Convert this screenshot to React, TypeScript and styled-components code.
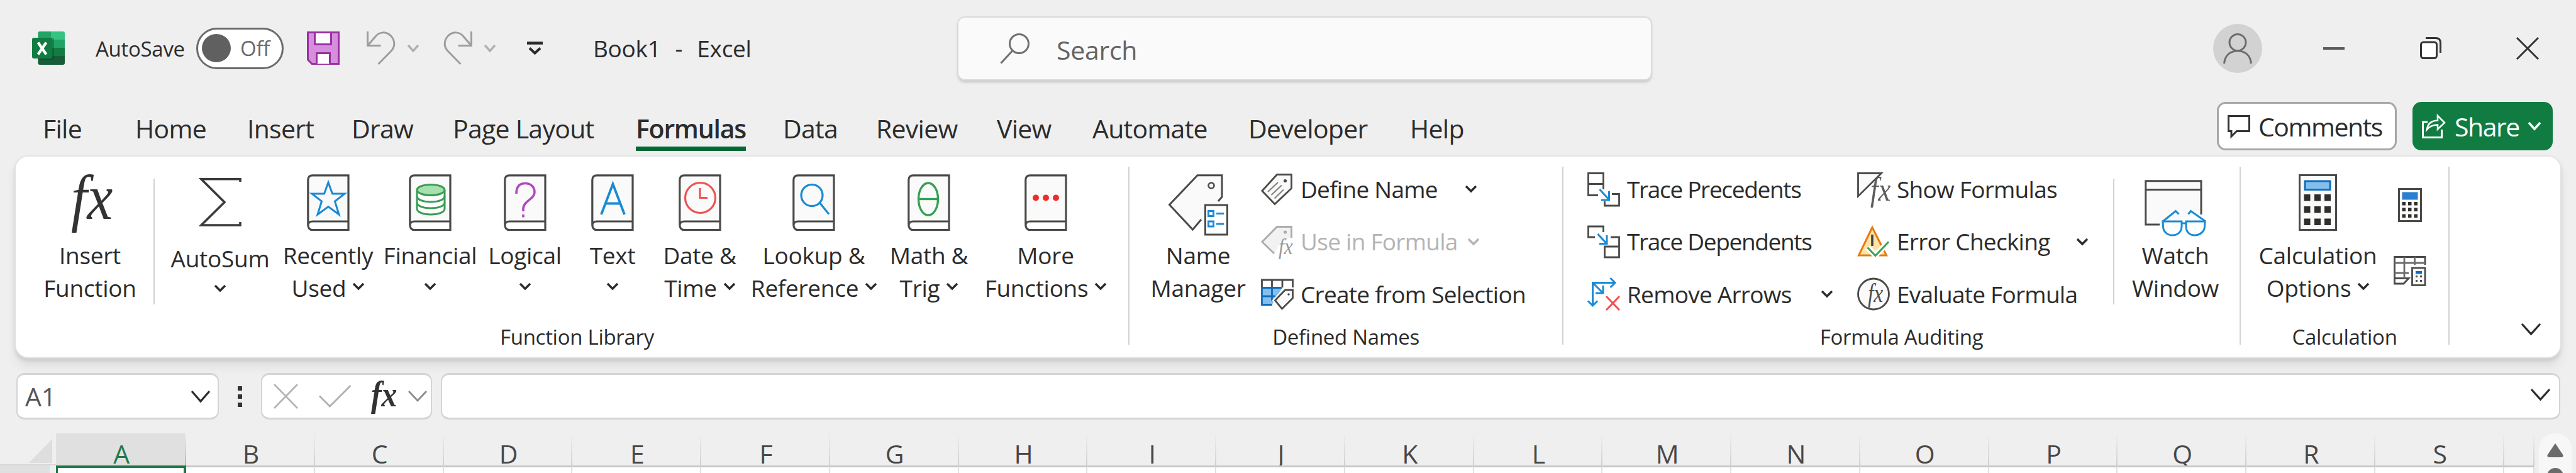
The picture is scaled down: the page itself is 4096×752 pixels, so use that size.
import React from "react";
import styled, { createGlobalStyle } from "styled-components";

const ink = "#2b2b2b";
const line = "#4a4a48";
const paper = "#fafafa";
const blue = "#1a8ad4";
const deepBlue = "#0f6cbd";
const green = "#107c41";

const GlobalStyle = createGlobalStyle`
  *, *::before, *::after { box-sizing: border-box; }
  html, body { margin: 0; padding: 0; background: #efefef; }
  body { overflow: hidden; }
  svg { display: block; flex: none; overflow: visible; }
`;

const Window = styled.div`
  width: 4096px;
  height: 752px;
  overflow: hidden;
  display: flex;
  flex-direction: column;
  background: #efefef;
  color: ${ink};
  font-family: "Open Sans", "Noto Sans", sans-serif;
  letter-spacing: -0.018em;
  white-space: nowrap;
`;

/* ---------- title bar ---------- */

const TitleBar = styled.header`
  height: 153px;
  flex: none;
  display: flex;
  align-items: center;
  padding-left: 51px;
`;

const TitleSlot = styled.div<{ $w: number }>`
  width: ${(p) => p.$w}px;
  flex: none;
  display: flex;
  align-items: center;
`;

const AutoSaveLabel = styled.span`
  font-size: 33px;
  line-height: 44px;
  padding-top: 2px;
`;

const Toggle = styled.div`
  width: 139px;
  height: 66px;
  border: 3px solid #6b6b6b;
  border-radius: 33px;
  background: #fff;
  display: flex;
  align-items: center;
  padding-left: 6px;
  gap: 15px;
  font-size: 33px;
  color: #6a6a6a;
`;

const Knob = styled.span`
  width: 46px;
  height: 45px;
  border-radius: 50%;
  background: #606060;
`;

const DocTitle = styled.span`
  font-size: 37px;
  line-height: 50px;
  padding-left: 2px;
  white-space: pre;
  word-spacing: 2.2px;
`;

const SearchBox = styled.div`
  width: 1101px;
  height: 98px;
  margin-top: 1px;
  border-radius: 10px;
  background: #fafafa;
  box-shadow: 0 0 0 2px #dadada, 0 4px 4px 1px #c9c9c9;
  display: flex;
  align-items: center;
  padding-left: 66px;
  gap: 42px;
  font-size: 41px;
  color: #646464;
`;

const SearchText = styled.span`
  padding-top: 3px;
`;

const Avatar = styled.div`
  width: 78px;
  height: 78px;
  border-radius: 50%;
  background: #d2d2d2;
  display: grid;
  place-items: center;
`;

/* ---------- tab strip ---------- */

const TabStrip = styled.nav`
  height: 96px;
  flex: none;
  display: flex;
  padding-left: 68px;
`;

const TabSlot = styled.div<{ $w: number }>`
  width: ${(p) => p.$w}px;
  flex: none;
  display: flex;
  align-items: flex-start;
`;

const Tab = styled.span<{ $active?: boolean }>`
  margin-top: 23px;
  height: 64px;
  line-height: 56px;
  font-size: 41px;
  font-weight: ${(p) => (p.$active ? 600 : 400)};
  letter-spacing: ${(p) => (p.$active ? "-0.03em" : "-0.018em")};
  border-bottom: 7px solid ${(p) => (p.$active ? "#006a35" : "transparent")};
`;

const StripActions = styled.div`
  margin-left: auto;
  margin-right: 37px;
  padding-top: 9px;
  display: flex;
  align-items: flex-start;
  gap: 25px;
`;

const CommentsButton = styled.button`
  width: 286px;
  height: 77px;
  padding: 0 0 0 14px;
  display: flex;
  align-items: center;
  gap: 13px;
  font: inherit;
  font-size: 41px;
  letter-spacing: -0.036em;
  color: ${ink};
  background: #fff;
  border: 3px solid #a6a6a6;
  border-radius: 14px;
`;

const ShareButton = styled(CommentsButton)`
  width: 223px;
  padding-left: 12px;
  gap: 14px;
  color: #fff;
  background: ${green};
  border-color: ${green};
`;

/* ---------- ribbon ---------- */

const Ribbon = styled.section`
  height: 319px;
  flex: none;
  margin: 0 25px;
  display: flex;
  background: #fff;
  border-radius: 20px;
  box-shadow: 0 0 3px 2px #e4e4e4, 0 4px 6px 0 #bdbdbd, 0 14px 16px 0 #dddddd;
`;

const Group = styled.div<{ $w: number }>`
  width: ${(p) => p.$w}px;
  flex: none;
  display: flex;
  flex-direction: column;
`;

const GroupBody = styled.div<{ $indent: number }>`
  height: 267px;
  padding-left: ${(p) => p.$indent}px;
  display: flex;
  align-items: flex-start;
`;

const GroupLabel = styled.div<{ $shift?: number }>`
  padding-left: ${(p) => p.$shift ?? 0}px;
  font-size: 33px;
  line-height: 40px;
  text-align: center;
`;

const GroupDivider = styled.div`
  width: 2px;
  height: 283px;
  flex: none;
  margin-top: 16px;
  background: #d2d2d2;
`;

const InnerDivider = styled.div<{ $after?: number }>`
  width: 2px;
  height: 200px;
  flex: none;
  margin: 35px ${(p) => p.$after ?? 0}px 0 0;
  background: #d2d2d2;
`;

const BigButton = styled.div<{ $w: number }>`
  width: ${(p) => p.$w}px;
  flex: none;
  display: flex;
  flex-direction: column;
  align-items: center;
  font-size: 37px;
  line-height: 52px;
`;

const BigIcon = styled.div<{ $top?: number }>`
  height: 131px;
  padding-top: ${(p) => p.$top ?? 28}px;
`;

const BigLine = styled.div<{ $drop?: number }>`
  height: 52px;
  padding-top: ${(p) => p.$drop ?? 0}px;
  display: flex;
  align-items: center;
  gap: 11px;

  svg { margin-bottom: 5px; }
`;

const SmallColumn = styled.div<{ $w: number }>`
  width: ${(p) => p.$w}px;
  flex: none;
  padding-top: 10px;
`;

const SmallRow = styled.div<{ $disabled?: boolean }>`
  height: 83.5px;
  display: flex;
  align-items: center;
  font-size: 37px;
  line-height: 52px;
  color: ${(p) => (p.$disabled ? "#b4b4b4" : ink)};
`;

const SmallIcon = styled.div`
  width: 63px;
  flex: none;
`;

const SmallText = styled.span<{ $w?: number; $tight?: boolean }>`
  width: ${(p) => (p.$w ? p.$w + "px" : "auto")};
  letter-spacing: ${(p) => (p.$tight ? "-0.036em" : "-0.02em")};
`;

const IconColumn = styled.div`
  width: 75px;
  padding-top: 50px;
  display: flex;
  flex-direction: column;
  align-items: center;
  gap: 53px;
`;

const RibbonEnd = styled.div`
  flex: 1;
  display: flex;
  justify-content: flex-end;
  align-items: flex-end;
  padding: 0 31px 35px 0;
`;

/* ---------- formula bar ---------- */

const FormulaBar = styled.div`
  flex: none;
  margin: 25px 25px 0 26px;
  height: 74px;
  display: flex;
`;

const Field = styled.div`
  height: 74px;
  flex: none;
  display: flex;
  align-items: center;
  background: #fff;
  border: 2px solid #d4d4d4;
  border-width: 3px 2px;
  border-radius: 13px;
`;

const NameBox = styled(Field)`
  width: 322px;
  padding: 0 12px 0 12px;
  justify-content: space-between;
  font-size: 41px;
  line-height: 50px;
  color: #555;
`;

const Grip = styled.div`
  width: 67px;
  display: flex;
  flex-direction: column;
  justify-content: center;
  align-items: center;
  gap: 6px;
`;

const GripDot = styled.span`
  width: 7px;
  height: 7px;
  background: #333;
`;

const EntryButtons = styled(Field)`
  width: 272px;
  padding-left: 18px;
`;

const EntrySlot = styled.div<{ $w: number }>`
  width: ${(p) => p.$w}px;
  flex: none;
`;

const FormulaInput = styled(Field)`
  flex: 1;
  margin-left: 14px;
  justify-content: flex-end;
  padding: 0 14px 6px 0;
`;

/* ---------- sheet ---------- */

const Sheet = styled.main`
  margin-top: 22px;
  flex: 1;
  display: flex;
`;

const Corner = styled.div`
  width: 89px;
  flex: none;
  display: flex;
  flex-direction: column;
`;

const CornerTop = styled.div`
  height: 51px;
  padding: 9px 0 0 46px;
  border-bottom: 2px solid #d8d8d8;
`;

const RowHeader = styled.div`
  flex: 1;
  width: 79px;
  background: #e0e0e0;
`;

const Column = styled.div<{ $w: number }>`
  width: ${(p) => p.$w}px;
  flex: none;
  display: flex;
  flex-direction: column;
`;

const ColumnHeader = styled.div<{ $selected?: boolean }>`
  height: 51px;
  padding: 6px 0 0 3px;
  line-height: 52px;
  text-align: center;
  font-size: 41px;
  color: ${(p) => (p.$selected ? "#1f7a4d" : "#484848")};
  background: ${(p) => (p.$selected ? "#e0e0e0" : "transparent")};
  border-right: 2px solid;
  border-image: linear-gradient(#efefef, ${(p) => (p.$selected ? "#b4b4b4" : "#cfcfcf")}) 1;
`;

const Cell = styled.div<{ $selected?: boolean }>`
  flex: 1;
  background: #fff;
  border-top: ${(p) => (p.$selected ? "4px solid #1f7a48" : "3px solid #c8c8c8")};
  border-right: ${(p) => (p.$selected ? "4px solid #1f7a48" : "2px solid #e1e1e1")};
  border-left: ${(p) => (p.$selected ? "3px solid #1f7a48" : "0")};
`;

const ScrollTrack = styled.div`
  width: 53px;
  margin-left: 7px;
  border-radius: 26px 26px 0 0;
  background: #f7f7f7;
  display: flex;
  flex-direction: column;
  align-items: center;
  padding-top: 15px;
  gap: 16px;
`;

const ScrollThumb = styled.div`
  width: 26px;
  height: 60px;
  border-radius: 13px;
  background: #6b6b6b;
`;

/* ---------- icons ---------- */

type ChevronProps = { w?: number; h?: number; color?: string; stroke?: number };

const Chevron = ({ w = 18, h = 9, color = ink, stroke = 3.4 }: ChevronProps) => (
  <svg width={w} height={h + 2} viewBox={`0 0 ${w} ${h + 2}`} fill="none" stroke={color} strokeWidth={stroke}>
    <path d={`M1 1 L${w / 2} ${h} L${w - 1} 1`} />
  </svg>
);

const ExcelLogo = () => (
  <svg width="52" height="53" viewBox="0 0 52 53">
    <path d="M12 0h18v13H9.500V2.500Q9.500 0 12 0Z" fill="#21a366" />
    <path d="M30 0h19q3 0 3 3v10H30Z" fill="#33c481" />
    <path d="M9.500 13H30v13H9.500Z" fill="#107c41" />
    <path d="M30 13h22v13H30Z" fill="#21a366" />
    <path d="M9.500 26H30v13H9.500Z" fill="#185c37" />
    <path d="M30 26h22v13H30Z" fill="#107c41" />
    <path d="M9.500 39H52v11q0 3-3 3H12.500q-3 0-3-3Z" fill="#185c37" />
    <path d="M12 10h20q3 0 3 3v29q0 3-3 3H9.500V10Z" fill="#0b3d22" opacity=".35" />
    <rect x="0" y="10" width="32" height="33" rx="3" fill="#107c41" />
    <path d="M9.500 17.500 22.500 36.500M22.500 17.500 9.500 36.500" stroke="#fff" strokeWidth="4.300" />
  </svg>
);

const SaveIcon = () => (
  <svg width="52" height="53" viewBox="0 0 52 53" stroke="#9b30a2" strokeWidth="3">
    <path d="M1.500 1.500H50.500V51.500H8L1.500 45Z" fill="#d68fdc" />
    <path d="M12.500 1.500H38.500V20.500H12.500Z" fill="#fff" />
    <path d="M15.500 51.500V34.500H36.500V51.500" fill="#fff" />
  </svg>
);

const UndoIcon = ({ flip }: { flip?: boolean }) => (
  <svg width="48" height="53" viewBox="0 0 48 53" fill="none" stroke="#9d9d9d" strokeWidth="3">
    <g transform={flip ? "translate(48 0) scale(-1 1)" : undefined}>
      <path d="M2.500 0V22.500H23.500" />
      <path d="M3 22 15.500 7.500C21 1 31 -.5 38.500 6 46 13 47 23 40.500 30.500L19.500 52" />
    </g>
  </svg>
);

const QuickAccessIcon = () => (
  <svg width="25" height="22" viewBox="0 0 25 22" fill="none" stroke={ink}>
    <path d="M0 2.500H25" strokeWidth="4.500" />
    <path d="M4 10.500 12.500 18.500 21 10.500" strokeWidth="4" />
  </svg>
);

const SearchIcon = () => (
  <svg width="48" height="49" viewBox="0 0 48 49" fill="none" stroke="#707070" strokeWidth="3">
    <circle cx="30.500" cy="16.500" r="15" />
    <path d="M20 27.500 1.500 47.500" />
  </svg>
);

const PersonIcon = () => (
  <svg width="46" height="48" viewBox="0 0 46 48" fill="none" stroke="#6c6c6c" strokeWidth="3">
    <circle cx="23" cy="14.500" r="13" />
    <path d="M1.500 48C3 35 11 28 23 28S43 35 44.500 48" />
  </svg>
);

const MinimizeIcon = () => (
  <svg width="34" height="4" viewBox="0 0 34 4">
    <rect width="34" height="4" fill="#5a5a5a" />
  </svg>
);

const RestoreIcon = () => (
  <svg width="34" height="35" viewBox="0 0 34 35" fill="none" stroke="#333" strokeWidth="3">
    <rect x="1.500" y="8" width="25" height="25.500" rx="4" fill="#fff" />
    <path d="M9 1.500H25Q32.500 1.500 32.500 9V25" />
  </svg>
);

const CloseIcon = () => (
  <svg width="36" height="36" viewBox="0 0 36 36" stroke="#333" strokeWidth="3">
    <path d="M1 1 35 35M35 1 1 35" />
  </svg>
);

const CommentIcon = () => (
  <svg width="36" height="36" viewBox="0 0 36 36" fill="none" stroke="#333" strokeWidth="3">
    <path d="M1.500 1.500H34.500V25.500H14.500L6 34V25.500H1.500Z" />
  </svg>
);

const ShareIcon = () => (
  <svg width="38" height="38" viewBox="0 0 38 38" fill="none" stroke="#fff" strokeWidth="3">
    <path d="M9 12H1.500V36.500H31.500V24" />
    <path d="M8 24C9 15 15 10 25 9.500V2L36 13 25 23.500V16.500C17 16.500 12 19 8 24Z" strokeWidth="2.600" />
  </svg>
);

type FxProps = { x: number; y: number; size: number; fill?: string; sx?: number; weight?: number };

const FxText = ({ x, y, size, fill = line, sx = 0.9, weight = 400 }: FxProps) => (
  <text
    transform={`translate(${x} ${y}) scale(${sx} 1)`}
    fontFamily='"Liberation Serif", serif'
    fontStyle="italic"
    fontWeight={weight}
    fontSize={size}
    letterSpacing="0"
    fill={fill}
  >
    fx
  </text>
);

const InsertFunctionIcon = () => (
  <svg width="78" height="90" viewBox="0 0 78 90">
    <FxText x={9} y={71} size={102} fill="#333" sx={0.9} />
  </svg>
);

const SigmaIcon = () => (
  <svg width="67" height="78" viewBox="0 0 67 78" fill="none" stroke="#3b3b39" strokeWidth="3.600">
    <path d="M65 6V1.800H3L40 38.500 3 75H65V70" />
  </svg>
);

const Book = ({ children }: { children: React.ReactNode }) => (
  <svg width="68" height="91" viewBox="0 0 68 91" fill="none">
    <path d="M9 1.800H66V88.500H9Q1.800 88.500 1.800 80V9Q1.800 1.800 9 1.800Z" fill={paper} />
    <path d="M66 75H9Q1.800 75 1.800 82 1.800 88.500 9 88.500H66Z" fill="#fff" />
    <path
      d="M66 75H9Q1.800 75 1.800 82M9 1.800H66V88.500H9Q1.800 88.500 1.800 80V9Q1.800 1.800 9 1.800Z"
      stroke={line}
      strokeWidth="3.200"
    />
    {children}
  </svg>
);

const StarMark = () => (
  <path
    d="M34 13 40.500 31H60L44.500 43 51 64 34 51.500 17 64 23.500 43 8 31H27.500Z"
    stroke={blue}
    strokeWidth="3"
  />
);

const CoinsMark = () => (
  <g stroke="#3a9c55" strokeWidth="3">
    <path d="M13 25V55C13 60 22 64 35 64S57 60 57 55V25" fill="#fff" />
    <path d="M13 35C13 40 22 44 35 44S57 40 57 35M13 45C13 50 22 54 35 54S57 50 57 45" />
    <ellipse cx="35" cy="25" rx="22" ry="8.500" fill="#a5e0ad" />
  </g>
);

const QuestionMark = () => (
  <g stroke="#b146c2" strokeWidth="3.600">
    <path d="M20 31C20 20 25 14.500 34 14.500S49 20 49 28.500C49 40 31 42 31 55V59" />
    <path d="M31 64V68.500" />
  </g>
);

const LetterMark = () => (
  <path d="M16 64 34.500 15.500 53 64M22.500 46.500H46.500" stroke={blue} strokeWidth="3.800" />
);

const ClockMark = () => (
  <g stroke="#ef5350" strokeWidth="3.200">
    <circle cx="34.500" cy="37.500" r="24" />
    <path d="M34 22V37.500H46" />
  </g>
);

const LensMark = () => (
  <g stroke={blue} strokeWidth="3.200">
    <circle cx="31" cy="33.500" r="17" />
    <path d="M43.500 45.500 58 63.500" />
  </g>
);

const ThetaMark = () => (
  <g stroke="#35a153" strokeWidth="3.400">
    <ellipse cx="33" cy="39.500" rx="15.500" ry="25.500" />
    <path d="M18 39.500H48" />
  </g>
);

const DotsMark = () => (
  <g fill="#ee2b2b">
    <circle cx="18" cy="37.500" r="5" />
    <circle cx="34" cy="37.500" r="5" />
    <circle cx="50" cy="37.500" r="5" />
  </g>
);

const NameManagerIcon = () => (
  <svg width="97" height="98" viewBox="0 0 97 98" fill="none" stroke={line} strokeWidth="3">
    <path d="M47 1.800H86V48H59V66L39.500 88 2.500 48.500Z" fill={paper} stroke="none" />
    <path d="M53 72 39.500 88 2.500 48.500 47 1.800H86V36L80 43" />
    <circle cx="69" cy="18" r="4.500" strokeWidth="2.600" />
    <rect x="59.500" y="49" width="35" height="47" fill="#fff" />
    <g stroke={blue} strokeWidth="3">
      <rect x="64.500" y="58.500" width="8" height="8" />
      <rect x="64.500" y="75" width="8" height="8" />
      <path d="M77 62.500H89M77 79H89" />
    </g>
  </svg>
);

const DefineNameIcon = () => (
  <svg width="52" height="50" viewBox="0 0 52 50" fill="none" stroke={line} strokeWidth="2.800">
    <path d="M25.500 1.500H48.500V23.500L22 48.500 1.800 27.500Z" fill={paper} />
    <circle cx="38.500" cy="11.500" r="2.600" fill={line} stroke="none" />
    <path d="M11 29 27 14M16.500 34 33 18.500M21.500 39.500 36 25.500" stroke="#85857f" strokeWidth="2.200" />
  </svg>
);

const UseInFormulaIcon = () => (
  <svg width="52" height="50" viewBox="0 0 52 50" fill="none" stroke="#ababab" strokeWidth="2.800">
    <path d="M25.500 1.500H48.500V18L30 26 22 45 1.800 25.500Z" fill="#f2f2f2" stroke="none" />
    <path d="M21 44 1.800 25.500 25.500 1.500H48.500V19" />
    <circle cx="38.500" cy="10" r="2.600" fill="#ababab" stroke="none" />
    <g stroke="none">
      <FxText x={28} y={45} size={35} fill="#9a9a9a" />
    </g>
  </svg>
);

const CreateFromSelectionIcon = () => (
  <svg width="52" height="50" viewBox="0 0 52 50" fill="none" stroke={line} strokeWidth="2.800">
    <path d="M1.500 14V2H50.500V14M17.500 2V14M34 2V14" />
    <path d="M1.500 14.500H34L17.500 41.500H1.500Z" fill="#83beec" stroke="none" />
    <path d="M33 14.500H1.500V41.500H18M1.500 28H23M17.500 14.500V35" stroke={deepBlue} />
    <path d="M38.500 18H50.500V31L33.500 48 22.500 34.500Z" fill="#fff" stroke="#fff" strokeWidth="7" />
    <path d="M38.500 18H50.500V31L33.500 48 22.500 34.500Z" fill={paper} />
    <circle cx="44" cy="25" r="1.800" fill={line} stroke="none" />
  </svg>
);

const TracePrecedentsIcon = () => (
  <svg width="52" height="54" viewBox="0 0 52 54" fill="none" stroke={line} strokeWidth="2.800">
    <path d="M17 36.500H1.500V1.500H25.500V27M1.500 18.500H25.500M39 34.500H50.500V53H27.500V46" />
    <path d="M19.500 27 34 43M34.500 30V44H22" stroke={blue} strokeWidth="3" />
  </svg>
);

const TraceDependentsIcon = () => (
  <svg width="52" height="54" viewBox="0 0 52 54" fill="none" stroke={line} strokeWidth="2.800">
    <path d="M12 20H1.500V3H25.500V12M37 20H50.500V52H27.500V35H50.500" />
    <path d="M16.500 15 30 29.500M31 17V30.500H19" stroke={blue} strokeWidth="3" />
  </svg>
);

const RemoveArrowsIcon = () => (
  <svg width="52" height="53" viewBox="0 0 52 53" fill="none" stroke={blue} strokeWidth="3">
    <path d="M8.500 45V8.500H43M36.500 1 44 8.500 36.500 16M1 37.500 8.500 45 16 37.500" />
    <path d="M10 10 24 24M25 13V25H13" />
    <path d="M30 30 51 52M51 30 30 52" stroke="#f4504f" />
  </svg>
);

const ShowFormulasIcon = () => (
  <svg width="52" height="54" viewBox="0 0 52 54" fill="none" stroke={line} strokeWidth="2.800">
    <path d="M1.500 38V1.500H38.500Z" fill={paper} />
    <g stroke="none">
      <FxText x={21} y={45} size={52} fill="#5c5c5c" sx={0.86} />
    </g>
  </svg>
);

const ErrorCheckingIcon = () => (
  <svg width="52" height="52" viewBox="0 0 52 52" fill="none">
    <path d="M24 3.500 46.500 48H2.500Z" fill="#fde3a7" stroke="#e87a12" strokeWidth="3" />
    <path d="M24 15V33" stroke="#444" strokeWidth="3.600" />
    <path d="M16.500 35.500 29 48 49.500 27" stroke="#fff" strokeWidth="9" />
    <path d="M16.500 35.500 29 48.500 50 26.500" stroke="#3aa757" strokeWidth="3.200" />
  </svg>
);

const EvaluateIcon = () => (
  <svg width="52" height="53" viewBox="0 0 52 53" fill="none">
    <circle cx="26" cy="26.500" r="24.500" fill={paper} stroke={line} strokeWidth="2.800" />
    <FxText x={17} y={38.500} size={42} fill="#4c4c4c" sx={0.8} />
  </svg>
);

const WatchWindowIcon = () => (
  <svg width="98" height="90" viewBox="0 0 98 90" fill="none" stroke={line} strokeWidth="3">
    <path d="M1.800 1.800H90V54L60 60 40 71H1.800Z" fill={paper} stroke="none" />
    <path d="M24 71H1.800V1.800H90V55M1.800 15.500H90" />
    <g stroke={blue}>
      <path d="M29 66H59V74C59 82 53 88 44.500 88S29.500 82 29.500 74Z" fill="#fff" />
      <path d="M96 66H66V74C66 82 71 88 79.500 88S95.500 82 95.500 74Z" fill="#fff" />
      <path d="M59 69H66M29 66 49.500 49.500 54.500 54.500M97 66 73.500 49.500 69.500 54.500" />
    </g>
  </svg>
);

const CalculatorIcon = () => (
  <svg width="61" height="91" viewBox="0 0 61 91" fill="none">
    <rect x="1.500" y="1.500" width="58" height="87" fill={paper} stroke={line} strokeWidth="3" />
    <rect x="10" y="11" width="40" height="13.500" fill="#83beec" stroke={deepBlue} strokeWidth="3" />
    {[32, 51, 70.5].map((y) =>
      [8.5, 25, 41].map((x) => <rect key={`${x}-${y}`} x={x} y={y} width="10" height="10.500" fill="#2e2e2c" />)
    )}
  </svg>
);

const CalculateNowIcon = () => (
  <svg width="38" height="54" viewBox="0 0 38 54" fill="none">
    <rect x="1.500" y="1.500" width="35" height="51" fill={paper} stroke={line} strokeWidth="3" />
    <rect x="6.500" y="6.500" width="25" height="12" fill="#2b7fd0" />
    {[22, 31.5, 41.5].map((y) =>
      [6.5, 16, 25.5].map((x) => <rect key={`${x}-${y}`} x={x} y={y} width="5.500" height="5.500" fill="#2e2e2c" />)
    )}
  </svg>
);

const CalculateSheetIcon = () => (
  <svg width="52" height="49" viewBox="0 0 52 49" fill="none" stroke={line} strokeWidth="2.800">
    <path d="M50 15V2.500H1.500V45H16L24 36.500H1.500" />
    <path d="M1.500 12H50M1.500 28H24M17 2.500V36.500M33.500 2.500V15" stroke="#6c6c6c" />
    <rect x="29.500" y="20" width="20.500" height="27.500" fill={paper} />
    <rect x="35" y="25" width="10" height="4.500" fill={deepBlue} stroke="none" />
    <path d="M35 33.500H38M42 33.500H45M35 40.500H38M42 40.500H45" />
  </svg>
);

const CancelIcon = () => (
  <svg width="39" height="40" viewBox="0 0 39 40" stroke="#b5b5b5" strokeWidth="2.800">
    <path d="M1 1 38 39M38 1 1 39" />
  </svg>
);

const EnterIcon = () => (
  <svg width="52" height="36" viewBox="0 0 52 36" fill="none" stroke="#b0b0b0" strokeWidth="2.800">
    <path d="M1 17.500 17.500 34 50.500 1" />
  </svg>
);

const BarFxIcon = () => (
  <svg width="47" height="53" viewBox="0 0 47 53">
    <FxText x={5} y={41.500} size={58} fill="#333" sx={0.86} weight={700} />
  </svg>
);

const CornerTriangle = () => (
  <svg width="37" height="38" viewBox="0 0 37 38">
    <path d="M37 0V38H0Z" fill="#dedede" />
  </svg>
);

const ScrollUpIcon = () => (
  <svg width="28" height="24" viewBox="0 0 28 24">
    <path d="M14 1.500 26 19.500Q27 22.500 24 22.500H4Q1 22.500 2 19.500Z" fill="#6b6b6b" stroke="#6b6b6b" />
  </svg>
);

/* ---------- data ---------- */

const tabs: { name: string; w: number }[] = [
  { name: "File", w: 147 },
  { name: "Home", w: 178 },
  { name: "Insert", w: 166 },
  { name: "Draw", w: 161 },
  { name: "Page Layout", w: 291 },
  { name: "Formulas", w: 234 },
  { name: "Data", w: 148 },
  { name: "Review", w: 192 },
  { name: "View", w: 152 },
  { name: "Automate", w: 248 },
  { name: "Developer", w: 257 },
  { name: "Help", w: 90 },
];

const books = [
  { w: 173, lines: ["Recently", "Used"], mark: <StarMark /> },
  { w: 152, lines: ["Financial", ""], mark: <CoinsMark /> },
  { w: 149, lines: ["Logical", ""], mark: <QuestionMark /> },
  { w: 130, lines: ["Text", ""], mark: <LetterMark /> },
  { w: 147, lines: ["Date &", "Time"], mark: <ClockMark /> },
  { w: 216, lines: ["Lookup &", "Reference"], mark: <LensMark /> },
  { w: 150, lines: ["Math &", "Trig"], mark: <ThetaMark /> },
  { w: 221, lines: ["More", "Functions"], mark: <DotsMark /> },
];

const columns = "BCDEFGHIJKLMNOPQRS".split("");

type SmallProps = {
  icon: React.ReactNode;
  text: string;
  textWidth?: number;
  tight?: boolean;
  disabled?: boolean;
};

const SmallCommand = ({ icon, text, textWidth, tight, disabled }: SmallProps) => (
  <SmallRow $disabled={disabled}>
    <SmallIcon>{icon}</SmallIcon>
    <SmallText $w={textWidth} $tight={tight}>{text}</SmallText>
    {textWidth && <Chevron color={disabled ? "#b4b4b4" : ink} />}
  </SmallRow>
);

export default function App() {
  return (
    <Window>
      <GlobalStyle />

      <TitleBar>
        <TitleSlot $w={101}><ExcelLogo /></TitleSlot>
        <TitleSlot $w={160}><AutoSaveLabel>AutoSave</AutoSaveLabel></TitleSlot>
        <TitleSlot $w={176}><Toggle><Knob />Off</Toggle></TitleSlot>
        <TitleSlot $w={94}><SaveIcon /></TitleSlot>
        <TitleSlot $w={66}><UndoIcon /></TitleSlot>
        <TitleSlot $w={56}><Chevron color="#b0b0b0" h={10} /></TitleSlot>
        <TitleSlot $w={66}><UndoIcon flip /></TitleSlot>
        <TitleSlot $w={68}><Chevron color="#b0b0b0" h={10} /></TitleSlot>
        <TitleSlot $w={103}><QuickAccessIcon /></TitleSlot>
        <TitleSlot $w={583}><DocTitle>{"Book1  -  Excel"}</DocTitle></TitleSlot>
        <TitleSlot $w={1995}>
          <SearchBox><SearchIcon /><SearchText>Search</SearchText></SearchBox>
        </TitleSlot>
        <TitleSlot $w={175}><Avatar><PersonIcon /></Avatar></TitleSlot>
        <TitleSlot $w={154}><MinimizeIcon /></TitleSlot>
        <TitleSlot $w={153}><RestoreIcon /></TitleSlot>
        <CloseIcon />
      </TitleBar>

      <TabStrip>
        {tabs.map((t) => (
          <TabSlot key={t.name} $w={t.w}>
            <Tab $active={t.name === "Formulas"}>{t.name}</Tab>
          </TabSlot>
        ))}
        <StripActions>
          <CommentsButton><CommentIcon />Comments</CommentsButton>
          <ShareButton><ShareIcon />Share<Chevron w={20} h={11} color="#fff" stroke={3.6} /></ShareButton>
        </StripActions>
      </TabStrip>

      <Ribbon>
        <Group $w={1769}>
          <GroupBody $indent={17}>
            <BigButton $w={202}>
              <BigIcon><InsertFunctionIcon /></BigIcon>
              <BigLine>Insert</BigLine>
              <BigLine>Function</BigLine>
            </BigButton>
            <InnerDivider $after={19} />
            <BigButton $w={170}>
              <BigIcon $top={34}><SigmaIcon /></BigIcon>
              <BigLine $drop={10}>AutoSum</BigLine>
              <BigLine $drop={6}><Chevron /></BigLine>
            </BigButton>
            {books.map((b) => (
              <BigButton key={b.lines[0]} $w={b.w}>
                <BigIcon><Book>{b.mark}</Book></BigIcon>
                <BigLine>{b.lines[0]}</BigLine>
                <BigLine>{b.lines[1]}<Chevron /></BigLine>
              </BigButton>
            ))}
          </GroupBody>
          <GroupLabel $shift={16}>Function Library</GroupLabel>
        </Group>
        <GroupDivider />

        <Group $w={688}>
          <GroupBody $indent={9}>
            <BigButton $w={200}>
              <BigIcon><NameManagerIcon /></BigIcon>
              <BigLine>Name</BigLine>
              <BigLine>Manager</BigLine>
            </BigButton>
            <SmallColumn $w={470}>
              <SmallCommand icon={<DefineNameIcon />} text="Define Name" textWidth={262} />
              <SmallCommand icon={<UseInFormulaIcon />} text="Use in Formula" textWidth={266} disabled />
              <SmallCommand icon={<CreateFromSelectionIcon />} text="Create from Selection" />
            </SmallColumn>
          </GroupBody>
          <GroupLabel>Defined Names</GroupLabel>
        </Group>
        <GroupDivider />

        <Group $w={1075}>
          <GroupBody $indent={38}>
            <SmallColumn $w={429}>
              <SmallCommand icon={<TracePrecedentsIcon />} text="Trace Precedents" tight />
              <SmallCommand icon={<TraceDependentsIcon />} text="Trace Dependents" tight />
              <SmallCommand icon={<RemoveArrowsIcon />} text="Remove Arrows" textWidth={309} />
            </SmallColumn>
            <SmallColumn $w={407}>
              <SmallCommand icon={<ShowFormulasIcon />} text="Show Formulas" />
              <SmallCommand icon={<ErrorCheckingIcon />} text="Error Checking" textWidth={286} />
              <SmallCommand icon={<EvaluateIcon />} text="Evaluate Formula" />
            </SmallColumn>
            <InnerDivider />
            <BigButton $w={194}>
              <BigIcon $top={37}><WatchWindowIcon /></BigIcon>
              <BigLine>Watch</BigLine>
              <BigLine>Window</BigLine>
            </BigButton>
          </GroupBody>
          <GroupLabel>Formula Auditing</GroupLabel>
        </Group>
        <GroupDivider />

        <Group $w={330}>
          <GroupBody $indent={14}>
            <BigButton $w={217}>
              <BigIcon><CalculatorIcon /></BigIcon>
              <BigLine>Calculation</BigLine>
              <BigLine>Options<Chevron /></BigLine>
            </BigButton>
            <IconColumn>
              <CalculateNowIcon />
              <CalculateSheetIcon />
            </IconColumn>
          </GroupBody>
          <GroupLabel>Calculation</GroupLabel>
        </Group>
        <GroupDivider />
        <RibbonEnd><Chevron w={31} h={17} stroke={3.2} /></RibbonEnd>
      </Ribbon>

      <FormulaBar>
        <NameBox>A1<Chevron w={30} h={17} stroke={3.2} /></NameBox>
        <Grip><GripDot /><GripDot /><GripDot /></Grip>
        <EntryButtons>
          <EntrySlot $w={72}><CancelIcon /></EntrySlot>
          <EntrySlot $w={78}><EnterIcon /></EntrySlot>
          <EntrySlot $w={64}><BarFxIcon /></EntrySlot>
          <Chevron w={30} h={16} color="#8c8c8c" stroke={2.8} />
        </EntryButtons>
        <FormulaInput><Chevron w={31} h={17} stroke={3.2} /></FormulaInput>
      </FormulaBar>

      <Sheet>
        <Corner>
          <CornerTop><CornerTriangle /></CornerTop>
          <RowHeader />
        </Corner>
        <Column $w={207}>
          <ColumnHeader $selected>A</ColumnHeader>
          <Cell $selected />
        </Column>
        {columns.map((c) => (
          <Column key={c} $w={204.75}>
            <ColumnHeader>{c}</ColumnHeader>
            <Cell />
          </Column>
        ))}
        <Column $w={48}>
          <ColumnHeader />
          <Cell />
        </Column>
        <ScrollTrack>
          <ScrollUpIcon />
          <ScrollThumb />
        </ScrollTrack>
      </Sheet>
    </Window>
  );
}
